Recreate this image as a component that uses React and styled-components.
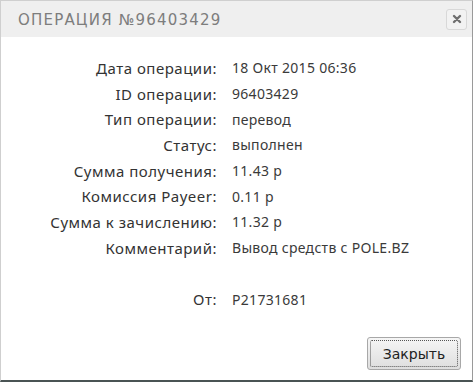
import React from "react";
import styled, { createGlobalStyle } from "styled-components";

const Global = createGlobalStyle`
  html, body { margin: 0; padding: 0; background: #fff; }
  body { width: 474px; height: 382px; overflow: hidden; }
`;

const Dialog = styled.div`
  box-sizing: border-box;
  width: 473px;
  height: 382px;
  border: 1px solid #cfcfcf;
  border-right-color: #9a9a9a;
  border-bottom: 2px solid #4a5454;
  background: #fff;
  display: flex;
  flex-direction: column;
`;

const TitleBar = styled.div`
  height: 36px;
  background: #efefef;
  display: flex;
  align-items: center;
  justify-content: space-between;
  padding: 0 5px 0 17px;
`;

const Title = styled.div`
  font-family: "DejaVu Sans", sans-serif;
  font-size: 15px;
  letter-spacing: 1.2px;
  color: #7d7d7d;
  padding-top: 1px;
`;

const CloseBtn = styled.div`
  width: 19px;
  height: 19px;
  border: 1px solid #d8d8d8;
  border-radius: 3px;
  background: #f2f2f2;
  display: flex;
  align-items: center;
  justify-content: center;
`;

const Body = styled.div`
  flex: 1;
  display: grid;
  grid-template-columns: 201px auto;
  grid-auto-rows: 25.7px;
  column-gap: 15px;
  padding: 18px 0 0 15px;
  align-content: start;
  font-family: "Noto Sans", sans-serif;
  align-items: center;
`;

const Label = styled.div`
  text-align: right;
  color: #333;
  font-size: 15px;
  letter-spacing: 0.5px;
  white-space: nowrap;
`;

const Value = styled.div`
  color: #3a3a3a;
  font-size: 14px;
  letter-spacing: 0.3px;
  white-space: nowrap;
`;

const Spacer = styled.div`
  grid-column: 1 / 3;
  height: 28px;
`;

const Footer = styled.div`
  display: flex;
  justify-content: flex-end;
  padding: 0 11px 10px 0;
`;

const Button = styled.button`
  width: 94px;
  height: 33px;
  border: 1px solid #a8a8a8;
  border-radius: 3px;
  background: linear-gradient(#f6f6f6, #dedede);
  font-family: "DejaVu Sans", sans-serif;
  font-size: 14px;
  color: #222;
  padding: 2px;
  cursor: pointer;
`;

const ButtonInner = styled.span`
  display: flex;
  align-items: center;
  justify-content: center;
  height: 100%;
  border: 1px dotted #555;
  border-radius: 2px;
  box-sizing: border-box;
`;

const rows = [
  ["Дата операции:", "18 Окт 2015 06:36"],
  ["ID операции:", "96403429"],
  ["Тип операции:", "перевод"],
  ["Статус:", "выполнен"],
  ["Сумма получения:", "11.43 р"],
  ["Комиссия Payeer:", "0.11 р"],
  ["Сумма к зачислению:", "11.32 р"],
  ["Комментарий:", "Вывод средств с POLE.BZ"],
];

export default function App() {
  return (
    <>
      <Global />
      <Dialog>
        <TitleBar>
          <Title>ОПЕРАЦИЯ №96403429</Title>
          <CloseBtn>
            <svg width="10" height="10" viewBox="0 0 10 10">
              <path d="M2 2L8 8M8 2L2 8" stroke="#6f6f6f" strokeWidth="2.4" strokeLinecap="round" />
            </svg>
          </CloseBtn>
        </TitleBar>
        <Body>
          {rows.map(([l, v]) => (
            <React.Fragment key={l}>
              <Label>{l}</Label>
              <Value>{v}</Value>
            </React.Fragment>
          ))}
          <Spacer />
          <Label>От:</Label>
          <Value>P21731681</Value>
        </Body>
        <Footer>
          <Button>
            <ButtonInner>Закрыть</ButtonInner>
          </Button>
        </Footer>
      </Dialog>
    </>
  );
}
